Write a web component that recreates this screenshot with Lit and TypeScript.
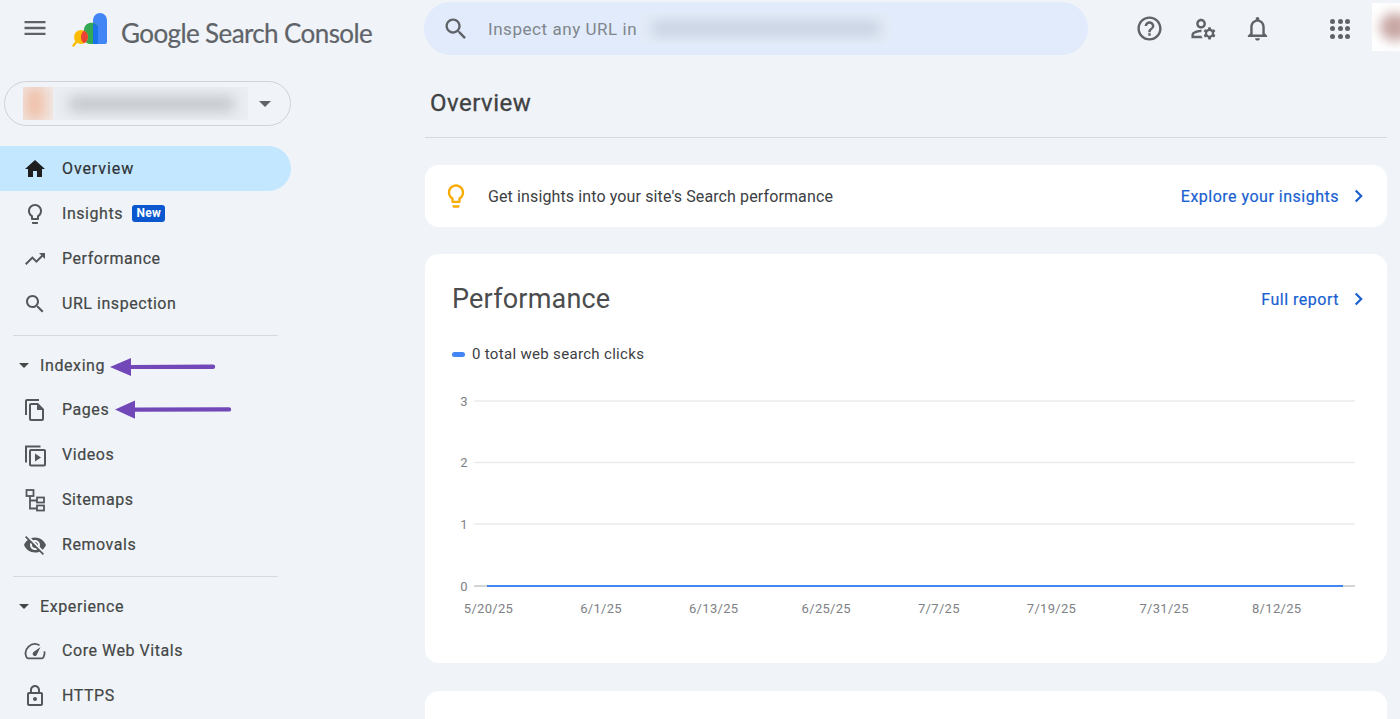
import { LitElement, html, css, svg } from "lit";
import { customElement } from "lit/decorators.js";

const P: Record<string, string> = {
  home: "M10 20v-6h4v6h5v-8h3L12 3 2 12h3v8z",
  bulb: "M9 21c0 .55.45 1 1 1h4c.55 0 1-.45 1-1v-1H9v1zm3-19C8.14 2 5 5.14 5 9c0 2.38 1.19 4.47 3 5.74V17c0 .55.45 1 1 1h6c.55 0 1-.45 1-1v-2.26c1.81-1.27 3-3.36 3-5.74 0-3.86-3.14-7-7-7zm2.85 11.1l-.85.6V16h-4v-2.3l-.85-.6C7.8 12.16 7 10.63 7 9c0-2.76 2.24-5 5-5s5 2.24 5 5c0 1.63-.8 3.16-2.15 4.1z",
  trend: "M16 6l2.29 2.29-4.88 4.88-4-4L2 16.59 3.41 18l6-6 4 4 6.3-6.29L22 12V6z",
  search: "M15.5 14h-.79l-.28-.27C15.41 12.59 16 11.11 16 9.5 16 5.91 13.09 3 9.5 3S3 5.91 3 9.5 5.91 16 9.5 16c1.61 0 3.09-.59 4.23-1.57l.27.28v.79l5 4.99L20.49 19l-4.99-5zm-6 0C7.01 14 5 11.99 5 9.5S7.01 5 9.5 5 14 7.01 14 9.5 11.99 14 9.5 14z",
  pages: "M16 1H4c-1.1 0-2 .9-2 2v14h2V3h12V1zm-1 4H8c-1.1 0-1.99.9-1.99 2L6 21c0 1.1.89 2 1.99 2H19c1.1 0 2-.9 2-2V11l-6-6zM8 21V7h6v5h5v9H8z",
  off: "M12 7c2.76 0 5 2.24 5 5 0 .65-.13 1.26-.36 1.83l2.92 2.92c1.51-1.26 2.7-2.89 3.43-4.75-1.73-4.39-6-7.5-11-7.5-1.4 0-2.74.25-3.98.7l2.16 2.16C10.74 7.13 11.35 7 12 7zM2 4.27l2.28 2.28.46.46C3.08 8.3 1.78 10.02 1 12c1.73 4.39 6 7.5 11 7.5 1.55 0 3.03-.3 4.38-.84l.42.42L19.73 22 21 20.73 3.27 3 2 4.27zM7.53 9.8l1.55 1.55c-.05.21-.08.43-.08.65 0 1.66 1.34 3 3 3 .22 0 .44-.03.65-.08l1.55 1.55c-.67.33-1.41.53-2.2.53-2.76 0-5-2.24-5-5 0-.79.2-1.53.53-2.2zm4.31-.78l3.15 3.15.02-.16c0-1.66-1.34-3-3-3l-.17.01z",
  lock: "M18 8h-1V6c0-2.76-2.24-5-5-5S7 3.24 7 6v2H6c-1.1 0-2 .9-2 2v10c0 1.1.9 2 2 2h12c1.1 0 2-.9 2-2V10c0-1.1-.9-2-2-2zM9 6c0-1.66 1.34-3 3-3s3 1.34 3 3v2H9V6zm9 14H6V10h12v10zm-6-3c1.1 0 2-.9 2-2s-.9-2-2-2-2 .9-2 2 .9 2 2 2z",
  help: "M11 18h2v-2h-2v2zm1-16C6.48 2 2 6.48 2 12s4.48 10 10 10 10-4.48 10-10S17.52 2 12 2zm0 18c-4.41 0-8-3.59-8-8s3.59-8 8-8 8 3.59 8 8-3.59 8-8 8zm0-14c-2.21 0-4 1.79-4 4h2c0-1.1.9-2 2-2s2 .9 2 2c0 2-3 1.75-3 5h2c0-2.25 3-2.5 3-5 0-2.21-1.79-4-4-4z",
  admin: "M4 18v-.65c0-.34.16-.66.41-.81C6.1 15.53 8.03 15 10 15c.03 0 .05 0 .08.01.1-.7.3-1.37.59-1.98-.22-.02-.44-.03-.67-.03-2.42 0-4.68.67-6.61 1.82-.88.52-1.39 1.5-1.39 2.53V20h9.26c-.42-.6-.75-1.28-.97-2H4zM10 12c2.21 0 4-1.79 4-4s-1.79-4-4-4-4 1.79-4 4 1.79 4 4 4zm0-6c1.1 0 2 .9 2 2s-.9 2-2 2-2-.9-2-2 .9-2 2-2zM20.75 16c0-.22-.03-.42-.06-.63l1.14-1.01-1-1.73-1.45.49c-.32-.27-.68-.48-1.08-.63L18 11h-2l-.3 1.49c-.4.15-.76.36-1.08.63l-1.45-.49-1 1.73 1.14 1.01c-.03.21-.06.41-.06.63s.03.42.06.63l-1.14 1.01 1 1.73 1.45-.49c.32.27.68.48 1.08.63L16 21h2l.3-1.49c.4-.15.76-.36 1.08-.63l1.45.49 1-1.73-1.14-1.01c.03-.21.06-.41.06-.63zM17 18c-1.1 0-2-.9-2-2s.9-2 2-2 2 .9 2 2-.9 2-2 2z",
  bell: "M12 22c1.1 0 2-.9 2-2h-4c0 1.1.9 2 2 2zm6-6v-5c0-3.07-1.63-5.64-4.5-6.32V4c0-.83-.67-1.5-1.5-1.5s-1.5.67-1.5 1.5v.68C7.64 5.36 6 7.92 6 11v5l-2 2v1h16v-1l-2-2zm-2 1H8v-6c0-2.48 1.51-4.5 4-4.5s4 2.02 4 4.5v6z",
  menu: "M3 18h18v-2H3v2zm0-5h18v-2H3v2zm0-7v2h18V6H3z",
};

const icon = (name: string, cls = "ic") =>
  html`<svg class=${cls} viewBox="0 0 24 24"><path d=${P[name]} fill="currentColor"></path></svg>`;

const videos = html`<svg class="ic" viewBox="0 0 24 24">
  <path d="M3 19.500V3.500h14.500" fill="none" stroke="currentColor" stroke-width="2"></path>
  <rect x="7" y="7" width="15" height="15.500" rx="1" fill="none" stroke="currentColor" stroke-width="2"></rect>
  <path d="M12 10.500v8l6-4z" fill="currentColor"></path>
</svg>`;

const sitemap = html`<svg class="ic" viewBox="0 0 24 24" fill="none" stroke="currentColor" stroke-width="1.800">
  <rect x="3.500" y="2" width="7" height="6"></rect>
  <rect x="14" y="9.500" width="7" height="5"></rect>
  <rect x="14" y="17.500" width="7" height="5"></rect>
  <path d="M7 8v12.500h7M7 12.500h7"></path>
</svg>`;

const gauge = html`<svg class="ic" viewBox="0 0 24 24">
  <path d="M16.500 6.200A9.300 9.300 0 0 0 3.600 18.400q.4.900 1.400.9h14q1 0 1.400-.9a9.300 9.300 0 0 0 1-6" fill="none" stroke="currentColor" stroke-width="1.800"></path>
  <path d="M10.200 13.200 17.500 8l-3.900 8.200a2.100 2.100 0 0 1-3.400-3z" fill="currentColor"></path>
</svg>`;

const chevron = html`<svg class="chev" viewBox="0 0 24 24"><path d="M8.700 6.500 14.200 12l-5.500 5.500" fill="none" stroke="currentColor" stroke-width="2.200"></path></svg>`;

const logo = html`<svg class="logo" viewBox="0 0 36 36">
  <path d="M21 8a7 7 0 0 1 14 0v22a2 2 0 0 1-2 2H21z" fill="#4285f4"></path>
  <path d="M12 18.500a7.500 7.500 0 0 1 14-4V32H18a6 6 0 0 1-6-6z" fill="#34a853"></path>
  <path d="M21 11.500a7.500 7.500 0 0 1 5 3V32h-5z" fill="#1a73e8"></path>
  <path d="M1.500 33.500 6 28" stroke="#fbbc04" stroke-width="2.400" stroke-linecap="round"></path>
  <circle cx="9" cy="25" r="7" fill="#fbbc04"></circle>
  <path d="M12 18.700a7 7 0 0 1 0 12.600 8 8 0 0 1 0-12.600z" fill="#ea4335"></path>
</svg>`;

const Y = [
  ["3", 401],
  ["2", 462.5],
  ["1", 524],
  ["0", 586],
] as const;
const X = ["5/20/25", "6/1/25", "6/13/25", "6/25/25", "7/7/25", "7/19/25", "7/31/25", "8/12/25"];

@customElement("app-root")
export class AppRoot extends LitElement {
  static styles = css`
    :host {
      display: block;
      position: relative;
      width: 1400px;
      height: 719px;
      overflow: hidden;
      background: #f0f4f9;
      font-family: Roboto, "Liberation Sans", sans-serif;
      color: #444746;
    }
    .ic { width: 24px; height: 24px; display: block; flex: none; }
    .top { display: flex; height: 57px; }
    .brand { width: 424px; display: flex; align-items: center; flex: none; padding-left: 21px; box-sizing: border-box; }
    .brand .ic { color: #5f6368; margin-top: -2px; width: 28px; height: 28px; }
    .logo { width: 36px; height: 36px; margin-left: 23px; margin-top: 3px; flex: none; }
    .brand-text { margin-left: 13px; font-size: 26px; letter-spacing: -0.6px; color: #5f6368; white-space: nowrap; margin-top: 8px; font-family: Lato, Roboto, sans-serif; -webkit-text-stroke: 0.2px currentColor; }
    .searchbar { width: 664px; height: 53px; margin-top: 2px; border-radius: 27px; background: #e1ebfb; display: flex; align-items: center; padding-left: 18px; box-sizing: border-box; flex: none; }
    .searchbar .ic { color: #5f6368; width: 28px; height: 28px; }
    .placeholder { margin-left: 18px; font-size: 17px; letter-spacing: 0.55px; color: #80868b; white-space: nowrap; }
    .smudge { overflow: hidden; flex: none; }
    .smudge i { display: block; filter: blur(7px); }
    .s-search { width: 252px; height: 31px; margin-left: 3px; background: #e4ecf9; }
    .s-search i { height: 15px; margin: 8px 12px; background: #c5d0df; }
    .actions { display: flex; align-items: center; flex: 1; height: 57px; gap: 25px; }
    .actions .ic { color: #5f6368; width: 29px; height: 29px; }
    .help { margin-left: 46.500px; }
    .apps { margin-left: 33.500px; width: 20px; display: grid; grid-template-columns: repeat(3, 5px); gap: 2.500px; flex: none; }
    .apps b { width: 5px; height: 5px; border-radius: 50%; background: #5f6368; }
    .avatar { width: 28px; height: 48px; margin-left: -3px; margin-top: -3px; background: #fff; overflow: hidden; flex: none; }
    .avatar i { display: block; width: 30px; height: 28px; margin: 10px 0 0 8px; border-radius: 50%; background: #c7a6a3; filter: blur(6px); }
    .cols { display: flex; }
    .side { width: 425px; flex: none; }
    .prop { width: 287px; height: 45px; margin: 24px 0 20px 4px; border: 1px solid #cfd3d6; border-radius: 23px; box-sizing: border-box; display: flex; align-items: center; padding-left: 18px; }
    .s-a { width: 30px; height: 33px; background: #f0e9e6; }
    .s-a i { height: 33px; width: 20px; margin-left: 2px; background: #f0bfa8; }
    .s-b { width: 195px; height: 33px; background: #ebeef2; }
    .s-b i { height: 14px; margin: 10px 14px 0 16px; background: #bfc3c8; }
    .caret { width: 0; height: 0; border: 6px solid transparent; border-top: 6px solid #5f6368; border-bottom: 0; margin-left: 11px; }
    .item { height: 45px; width: 291px; display: flex; align-items: center; padding-left: 23px; box-sizing: border-box; gap: 15px; font-size: 16px; letter-spacing: 0.55px; color: #444746; -webkit-text-stroke: 0.2px currentColor; }
    .item .ic { color: #55585a; }
    .item.on { background: #c2e7ff; border-radius: 0 23px 23px 0; color: #2f3336; letter-spacing: 0.9px; }
    .item.on .ic { color: #1f1f1f; }
    .new { background: #0b57d0; color: #fff; font-size: 12px; font-weight: 700; border-radius: 3px; padding: 1px 4.500px; margin-left: -6px; line-height: 15px; letter-spacing: 0.2px; -webkit-text-stroke: 0; }
    hr { width: 265px; margin: 9px 0 8px 13px; border: 0; border-top: 1px solid #d6dade; }
    .head { height: 43px; display: flex; align-items: center; font-size: 16px; letter-spacing: 0.6px; color: #444746; -webkit-text-stroke: 0.2px currentColor; padding-left: 19px; }
    .head::before { content: ""; width: 0; height: 0; border: 5px solid transparent; border-top: 5px solid #444746; border-bottom: 0; margin-right: 11px; }
    .main { width: 962px; flex: none; }
    .title { height: 81px; box-sizing: border-box; padding: 33px 0 0 5px; font-size: 24px; line-height: 27px; letter-spacing: 0.5px; color: #3f4143; -webkit-text-stroke: 0.3px currentColor; border-bottom: 1px solid #d6d8da; }
    .card { background: #fff; border-radius: 14px; margin-top: 27px; }
    .ins { height: 62px; display: flex; align-items: center; padding: 0 16px 0 17px; font-size: 16px; letter-spacing: 0.12px; color: #3c4043; }
    .ins > .ic { color: #f9ab00; width: 28px; height: 28px; }
    .ins span.t { margin-left: 18px; flex: 1; }
    .lnk { color: #1a5fd0; font-size: 16px; letter-spacing: 0.5px; display: flex; align-items: center; gap: 8px; -webkit-text-stroke: 0.2px currentColor; }
    .chev { width: 24px; height: 24px; color: #1a5fd0; flex: none; }
    .perf { height: 409px; box-sizing: border-box; padding: 26px 16px 0 27px; }
    .phead { display: flex; align-items: center; justify-content: space-between; height: 38px; }
    .ptitle { font-size: 27px; letter-spacing: 0.2px; color: #4a4c4e; }
    .legend { display: flex; align-items: center; gap: 7px; margin-top: 26px; height: 20px; font-size: 15px; letter-spacing: 0.32px; color: #3c4043; }
    .legend i { width: 13px; height: 5px; border-radius: 3px; background: #4285f4; }
    .chart { display: block; width: 962px; height: 240px; margin: 26px 0 0 -27px; }
    .chart text { font-size: 13px; letter-spacing: 0.3px; fill: #7e8185; font-family: Roboto, sans-serif; }
    .stub { height: 60px; margin-top: 28px; }
    .arrows { position: absolute; inset: 0; width: 1400px; height: 719px; pointer-events: none; }
  `;

  private nav(name: string, label: string, on = false) {
    return html`<div class="item ${on ? "on" : ""}">${icon(name)}<span>${label}</span></div>`;
  }

  render() {
    return html`
      <div class="top">
        <div class="brand">${icon("menu")}${logo}<span class="brand-text">Google Search Console</span></div>
        <div class="searchbar">
          ${icon("search")}
          <span class="placeholder">Inspect any URL in</span>
          <div class="smudge s-search"><i></i></div>
        </div>
        <div class="actions">
          <span class="help">${icon("help")}</span>
          ${icon("admin")}
          ${icon("bell")}
          <div class="apps">${Array.from({ length: 9 }, () => html`<b></b>`)}</div>
          <div class="avatar"><i></i></div>
        </div>
      </div>
      <div class="cols">
        <aside class="side">
          <div class="prop">
            <div class="smudge s-a"><i></i></div>
            <div class="smudge s-b"><i></i></div>
            <span class="caret"></span>
          </div>
          ${this.nav("home", "Overview", true)}
          <div class="item">${icon("bulb")}<span>Insights</span><span class="new">New</span></div>
          ${this.nav("trend", "Performance")}
          ${this.nav("search", "URL inspection")}
          <hr />
          <div class="head">Indexing</div>
          ${this.nav("pages", "Pages")}
          <div class="item">${videos}<span>Videos</span></div>
          <div class="item">${sitemap}<span>Sitemaps</span></div>
          ${this.nav("off", "Removals")}
          <hr />
          <div class="head">Experience</div>
          <div class="item">${gauge}<span>Core Web Vitals</span></div>
          ${this.nav("lock", "HTTPS")}
        </aside>
        <main class="main">
          <div class="title">Overview</div>
          <div class="card ins">
            ${icon("bulb")}
            <span class="t">Get insights into your site's Search performance</span>
            <span class="lnk">Explore your insights ${chevron}</span>
          </div>
          <div class="card perf">
            <div class="phead">
              <span class="ptitle">Performance</span>
              <span class="lnk">Full report ${chevron}</span>
            </div>
            <div class="legend"><i></i><span>0 total web search clicks</span></div>
            <svg class="chart" viewBox="425 390 962 240">
              ${Y.map(
                ([l, y]) => svg`
                  <line x1="474" x2="1355" y1=${y} y2=${y} stroke=${l === "0" ? "#c4c6c8" : "#ebebeb"} stroke-width="1.500"></line>
                  <text x="464" y=${y + 4.5} text-anchor="middle">${l}</text>`
              )}
              <line x1="487" x2="1343" y1="586" y2="586" stroke="#4285f4" stroke-width="2"></line>
              ${X.map(
                (l, i) => svg`<text x=${488.5 + i * 112.6} y="613" text-anchor="middle">${l}</text>`
              )}
            </svg>
          </div>
          <div class="card stub"></div>
        </main>
      </div>
      <svg class="arrows" viewBox="0 0 1400 719">
        <path d="M110 367 131 358v7l82-.5a2.200 2.200 0 0 1 0 4.400l-82 .1v7z" fill="#7248b9"></path>
        <path d="M115 409.500 135 400.500v7l94-.3a2.200 2.200 0 0 1 0 4.400l-94 .1v7z" fill="#7248b9"></path>
      </svg>
    `;
  }
}
